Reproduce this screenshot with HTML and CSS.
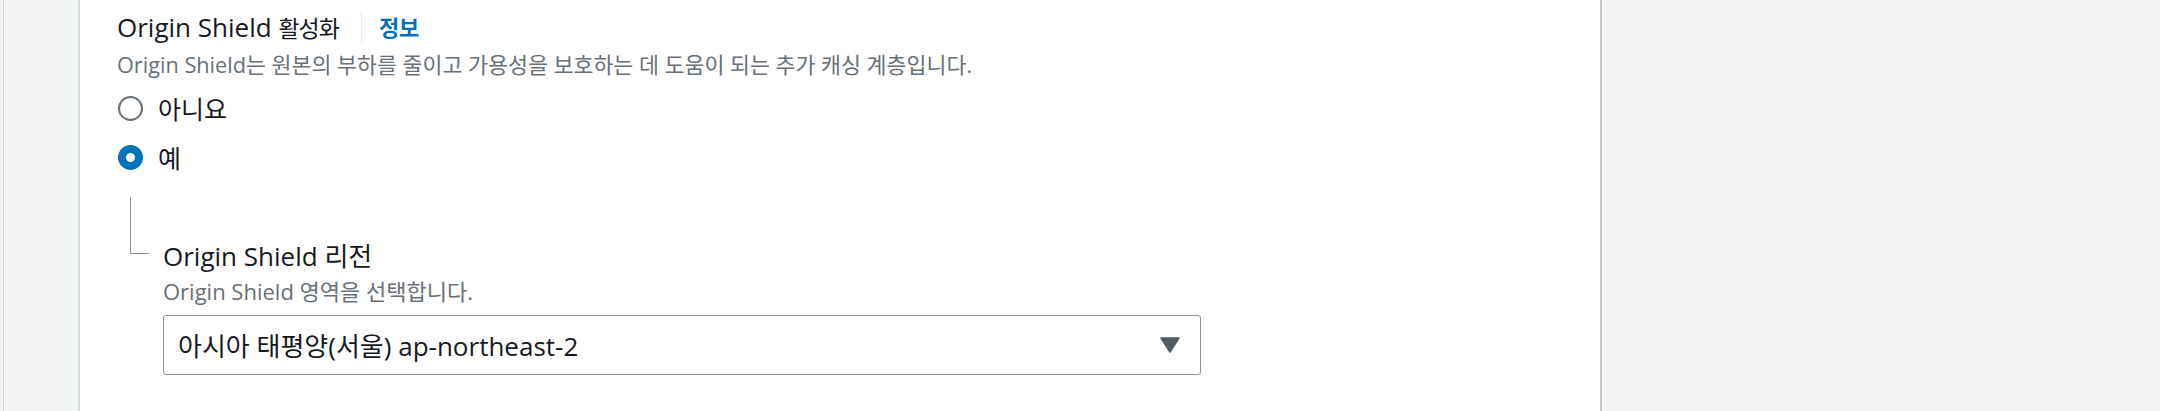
FILE: index.html
```html
<!DOCTYPE html>
<html lang="ko">
<head>
    <meta charset="UTF-8">
    <meta name="viewport" content="width=device-width, initial-scale=1.0">
    <title>Origin Shield</title>
    <link rel="stylesheet" href="styles.css">
</head>
<body>
    <div class="frame">
        <div class="panel">
            <div class="field">
                <div class="label-row">
                    <span class="label">Origin Shield <span class="label-ko">활성화</span></span>
                    <a class="info-link" href="#">정보</a>
                </div>
                <div class="desc">Origin Shield는 원본의 부하를 줄이고 가용성을 보호하는 데 도움이 되는 추가 캐싱 계층입니다.</div>

                <div class="radios">
                    <label class="radio">
                        <span class="dot"></span>
                        <span class="radio-text">아니요</span>
                    </label>
                    <label class="radio">
                        <span class="dot checked"></span>
                        <span class="radio-text">예</span>
                    </label>
                </div>

                <div class="nested">
                    <div class="branch"></div>
                    <div class="nested-body">
                        <div class="sub-label">Origin Shield 리전</div>
                        <div class="sub-desc">Origin Shield 영역을 선택합니다.</div>
                        <div class="select">
                            <span class="select-text">아시아 태평양(서울) ap-northeast-2</span>
                            <svg class="caret" width="20" height="16" viewBox="0 0 20 16">
                                <path d="M1 1 H19 L10 15 Z" fill="#545b64" stroke="#545b64" stroke-width="1.5" stroke-linejoin="round"/>
                            </svg>
                        </div>
                    </div>
                </div>
            </div>
        </div>
    </div>
</body>
</html>
```

FILE: styles.css
```css
body {
    margin: 0;
    background: #f2f3f3;
    font-family: 'Open Sans', 'Noto Sans CJK KR', sans-serif;
    color: #16191f;
    height: 411px;
    overflow: hidden;
}
.frame {
    margin-left: 3px;
    border-left: 1px solid #d5dbdb;
    padding-left: 74px;
    height: 411px;
}
.panel {
    width: 1520px;
    height: 411px;
    background: white;
    border-left: 2px solid #d5dbdb;
    border-right: 2px solid #c4c7c7;
}
.field {
    padding: 10px 0 0 37px;
}
.label-row {
    display: flex;
    align-items: center;
    height: 34px;
}
.label {
    font-size: 26px;
    line-height: 34px;
}
.label-ko {
    font-size: 23px;
    letter-spacing: -1px;
}
.info-link {
    margin-left: 22px;
    padding-left: 17px;
    border-left: 1px solid #e9ebed;
    height: 32px;
    line-height: 32px;
    font-size: 22px;
    font-weight: bold;
    color: #0073bb;
    text-decoration: none;
}
.desc {
    margin-top: 7px;
    font-size: 21.7px;
    line-height: 28px;
    color: #687078;
}
.radios {
    margin-top: 13px;
    display: flex;
    flex-direction: column;
    gap: 17px;
}
.radio {
    display: flex;
    align-items: center;
    height: 32px;
}
.dot {
    box-sizing: border-box;
    width: 25px;
    height: 25px;
    border-radius: 50%;
    border: 2px solid #687078;
    margin-left: 1px;
}
.dot.checked {
    border: 8px solid #0073bb;
}
.radio-text {
    margin-left: 15px;
    font-size: 25px;
}
.nested {
    margin-top: 24px;
    display: flex;
}
.branch {
    flex: none;
    width: 18px;
    height: 56px;
    margin-left: 13px;
    border-left: 1px solid #879596;
    border-bottom: 1px solid #879596;
}
.nested-body {
    margin-left: 14px;
    padding-top: 42px;
}
.sub-label {
    font-size: 26px;
    line-height: 34px;
}
.sub-desc {
    margin-top: 4px;
    font-size: 22px;
    line-height: 28px;
    color: #687078;
}
.select {
    box-sizing: border-box;
    margin-top: 10px;
    width: 1038px;
    height: 60px;
    border: 1px solid #879596;
    border-radius: 3px;
    display: flex;
    align-items: center;
    justify-content: space-between;
    padding: 0 20px 0 14px;
}
.select-text {
    font-size: 26px;
}
.caret {
    display: block;
}
```
